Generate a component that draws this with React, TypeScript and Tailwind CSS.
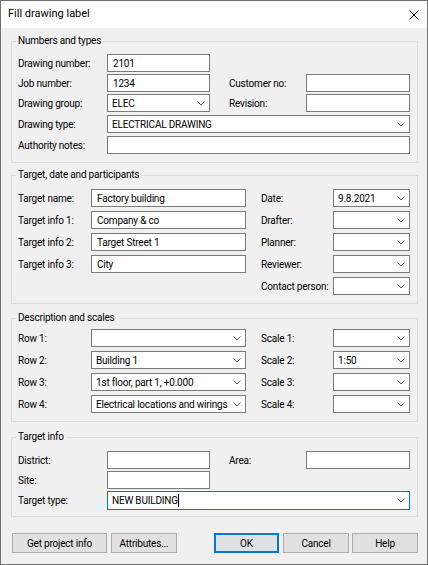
import React from 'react';

function Chevron() {
  return (
    <svg width="8" height="5" viewBox="0 0 8 5" className="shrink-0">
      <polyline points="0.5,0.5 4,4 7.5,0.5" fill="none" stroke="#606060" strokeWidth="1" />
    </svg>
  );
}

function TextBox({ className = '', value = '' }: { className?: string; value?: string }) {
  return (
    <div className={`h-[18px] shrink-0 bg-white border border-[#7a7a7a] flex items-center pl-[5px] whitespace-nowrap overflow-hidden ${className}`}>
      {value}
    </div>
  );
}

function Combo({ className = '', value = '', focused = false }: { className?: string; value?: string; focused?: boolean }) {
  return (
    <div
      className={`shrink-0 bg-white border flex items-center justify-between pl-[4px] pr-[4px] whitespace-nowrap overflow-hidden ${
        focused ? 'h-[19px] border-[#0078d7]' : 'h-[18px] border-[#7a7a7a]'
      } ${className}`}
    >
      <span className="flex items-center">
        {value}
        {focused && <span className="inline-block w-px h-[13px] bg-black" />}
      </span>
      <Chevron />
    </div>
  );
}

function Label({ className = '', children }: { className?: string; children?: React.ReactNode }) {
  return <div className={`shrink-0 whitespace-nowrap ${className}`}>{children}</div>;
}

function Group({ title, className = '', children }: { title: string; className?: string; children: React.ReactNode }) {
  return (
    <fieldset className={`ml-[10px] mr-[9px] border border-[#dcdcdc] ${className}`}>
      <legend className="ml-[4px] px-[2px] leading-[14px]">{title}</legend>
      {children}
    </fieldset>
  );
}

function Button({ className = '', label, primary = false }: { className?: string; label: string; primary?: boolean }) {
  return (
    <div
      className={`h-[20px] shrink-0 flex items-center justify-center bg-[#e1e1e1] border ${
        primary ? 'border-[#0078d7] shadow-[inset_0_0_0_1px_#0078d7]' : 'border-[#adadad]'
      } ${className}`}
    >
      {label}
    </div>
  );
}

export default function App() {
  return (
    <div className="w-[428px] h-[565px] border border-[#707070] bg-[#f0f0f0] flex flex-col text-[10px] tracking-[-0.2px] text-black font-['Roboto',sans-serif]">
      {/* Title bar */}
      <div className="h-[27px] shrink-0 bg-white flex items-center justify-between pl-[7px] pr-[8px]">
        <span className="text-[11px] tracking-normal">Fill drawing label</span>
        <svg width="10" height="10" viewBox="0 0 10 10">
          <path d="M0.5 0.5 L9.5 9.5 M9.5 0.5 L0.5 9.5" stroke="#000" strokeWidth="1" fill="none" />
        </svg>
      </div>

      {/* Numbers and types */}
      <Group title="Numbers and types" className="mt-[6px]">
        <div className="pl-[6px] pt-[6px] pb-[8px] flex flex-col">
          <div className="flex items-center">
            <Label className="w-[89px]">Drawing number:</Label>
            <TextBox className="w-[103px]" value="2101" />
          </div>
          <div className="flex items-center mt-[2px]">
            <Label className="w-[89px]">Job number:</Label>
            <TextBox className="w-[103px]" value="1234" />
            <div className="w-[19px] shrink-0" />
            <Label className="w-[77px]">Customer no:</Label>
            <TextBox className="w-[104px]" />
          </div>
          <div className="flex items-center mt-[2px]">
            <Label className="w-[89px]">Drawing group:</Label>
            <Combo className="w-[103px]" value="ELEC" />
            <div className="w-[19px] shrink-0" />
            <Label className="w-[77px]">Revision:</Label>
            <TextBox className="w-[104px]" />
          </div>
          <div className="flex items-center mt-[3px]">
            <Label className="w-[89px]">Drawing type:</Label>
            <Combo className="w-[303px]" value="ELECTRICAL DRAWING" />
          </div>
          <div className="flex items-center mt-[3px]">
            <Label className="w-[89px]">Authority notes:</Label>
            <TextBox className="w-[303px]" />
          </div>
        </div>
      </Group>

      {/* Target, date and participants */}
      <Group title="Target, date and participants" className="mt-[5px]">
        <div className="pl-[6px] pt-[7px] pb-[8px] flex flex-col gap-[4px]">
          {[
            ['Target name:', 'Factory building', 'Date:', '9.8.2021'],
            ['Target info 1:', 'Company & co', 'Drafter:', ''],
            ['Target info 2:', 'Target Street 1', 'Planner:', ''],
            ['Target info 3:', 'City', 'Reviewer:', ''],
          ].map(([l, v, r, rv]) => (
            <div key={l} className="flex items-center">
              <Label className="w-[73px]">{l}</Label>
              <TextBox className="w-[155px]" value={v} />
              <div className="w-[15px] shrink-0" />
              <Label className="w-[72px]">{r}</Label>
              <Combo className="w-[77px]" value={rv} />
            </div>
          ))}
          <div className="flex items-center">
            <div className="w-[243px] shrink-0" />
            <Label className="w-[72px]">Contact person:</Label>
            <Combo className="w-[77px]" />
          </div>
        </div>
      </Group>

      {/* Description and scales */}
      <Group title="Description and scales" className="mt-[7px]">
        <div className="pl-[6px] pt-[4px] pb-[8px] flex flex-col gap-[4px]">
          {[
            ['Row 1:', '', 'Scale 1:', ''],
            ['Row 2:', 'Building 1', 'Scale 2:', '1:50'],
            ['Row 3:', '1st floor, part 1, +0.000', 'Scale 3:', ''],
            ['Row 4:', 'Electrical locations and wirings', 'Scale 4:', ''],
          ].map(([l, v, r, rv]) => (
            <div key={l} className="flex items-center">
              <Label className="w-[73px]">{l}</Label>
              <Combo className="w-[155px]" value={v} />
              <div className="w-[15px] shrink-0" />
              <Label className="w-[72px]">{r}</Label>
              <Combo className="w-[77px]" value={rv} />
            </div>
          ))}
        </div>
      </Group>

      {/* Target info */}
      <Group title="Target info" className="mt-[8px]">
        <div className="pl-[6px] pt-[7px] pb-[6px] flex flex-col gap-[2px]">
          <div className="flex items-center">
            <Label className="w-[89px]">District:</Label>
            <TextBox className="w-[103px]" />
            <div className="w-[19px] shrink-0" />
            <Label className="w-[77px]">Area:</Label>
            <TextBox className="w-[104px]" />
          </div>
          <div className="flex items-center">
            <Label className="w-[89px]">Site:</Label>
            <TextBox className="w-[103px]" />
          </div>
          <div className="flex items-center">
            <Label className="w-[89px]">Target type:</Label>
            <Combo className="w-[303px]" value="NEW BUILDING" focused />
          </div>
        </div>
      </Group>

      {/* Buttons */}
      <div className="flex items-center mt-[16px] ml-[11px]">
        <Button className="w-[95px]" label="Get project info" />
        <Button className="w-[66px] ml-[4px]" label="Attributes..." />
        <Button className="w-[65px] ml-[37px]" label="OK" primary />
        <Button className="w-[66px] ml-[4px]" label="Cancel" />
        <Button className="w-[66px] ml-[3px]" label="Help" />
      </div>
    </div>
  );
}
